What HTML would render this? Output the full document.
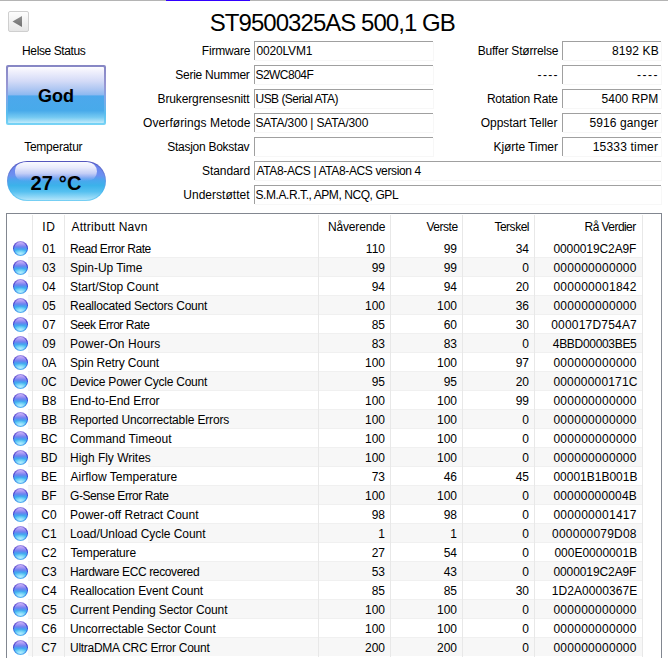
<!DOCTYPE html>
<html><head><meta charset="utf-8">
<style>
*{margin:0;padding:0;box-sizing:border-box}
html,body{width:668px;height:658px;overflow:hidden;background:#fff}
body{position:relative;font-family:"Liberation Sans",sans-serif;color:#000;font-size:12px}
.a{position:absolute;white-space:nowrap}
#topline{position:absolute;left:0;top:0;width:668px;height:1px;background:#b4b4b4}
#topblue{position:absolute;left:166px;top:0;width:84px;height:1px;background:#3200ff}
#back{position:absolute;left:8px;top:11px;width:21px;height:21px;border:1px solid #cfcfcf;border-radius:2px;background:linear-gradient(#fdfdfd,#e6e6e6)}
#title{left:-1px;top:8px;width:668px;text-align:center;font-size:24px;letter-spacing:-0.85px}
.lbl{position:absolute;text-align:right;white-space:nowrap;line-height:20px;height:20px;letter-spacing:-0.25px}
.box{position:absolute;height:20px}
.box::before{content:"";position:absolute;left:0;top:0;right:1px;bottom:1px;border-top:1px solid #a0a0a0;border-left:1px solid #a0a0a0}
.box::after{content:"";position:absolute;left:1px;top:1px;right:0;bottom:0;border-right:1px solid #f7f7f7;border-bottom:1px solid #f7f7f7}
.r{text-align:right}
.box:not(.r){letter-spacing:-0.25px}
#god{position:absolute;left:6px;top:65px;width:100px;height:60px;border-radius:2px;background:linear-gradient(#8686c4 0%,#9898d4 35%,#80a8e8 55%,#58bcee 80%,#78d4f6 100%);padding:2px}
#god .in{width:96px;height:56px;border-radius:1px;background:linear-gradient(#fdfdff 0%,#f0f0fc 8%,#d4dbf7 25%,#adc6f2 40%,#8cb8f0 50%,#4ca8ec 51.5%,#48aaea 78%,#76caf2 90%,#c0eafa 100%);font-weight:bold;font-size:18px;text-align:center;line-height:58px}
#temp{position:absolute;left:7px;top:161px;width:99px;height:40px;border-radius:20px;background:linear-gradient(#5454bc 0%,#6a8ae0 40%,#48b8f0 75%,#78d0f4 100%);padding:1px}
#temp .in{position:relative;width:97px;height:38px;border-radius:19px;background:linear-gradient(#6a7cec 0%,#6c90f0 35%,#4aa6ee 48%,#3cb2ea 62%,#56c0f0 78%,#b0e4fa 100%);overflow:hidden}
#temp .gl2{position:absolute;left:7px;top:0px;width:82px;height:19px;border-radius:9px 10px 10px 9px;background:linear-gradient(#fafaff 0%,#e8eafc 30%,#c4cef6 60%,rgba(150,180,244,.55) 85%,rgba(120,160,240,0) 100%)}
#temp span{position:absolute;left:0;top:0;width:97px;text-align:center;font-weight:bold;font-size:20px;line-height:42px;letter-spacing:0.2px;padding-right:1px}
#list{position:absolute;left:6px;top:213px;width:656px;height:450px;border:1px solid #828790;border-bottom:none;overflow:hidden;font-size:12px}
.rb{position:absolute;left:21px;width:614px;height:19px;background:#f7f7f7;border-top:1px solid #f0f0f0}
.gl{position:absolute;top:1px;width:1px;height:442px;background:#e8e8e8}
.t{position:absolute;white-space:nowrap;line-height:19px;height:19px}
.c{text-align:center}
.n{letter-spacing:-0.3px}
.ic{position:absolute;left:5.5px;width:15px;height:15px;margin-top:0.5px;border-radius:50%;background:linear-gradient(#a898ec 0%,#4a3ac8 25%,#3a4ed8 50%,#3a84e8 78%,#58b8f2 100%)}
.ic::after{content:"";position:absolute;left:1px;top:1px;width:13px;height:13px;border-radius:50%;background:radial-gradient(ellipse 55% 32% at 50% 88%,rgba(190,240,255,.85),rgba(190,240,255,0)),linear-gradient(#ccb6fa 0%,#a898f4 18%,#6e82f0 38%,#4a9cf0 52%,#3cb8f0 68%,#54c8f4 85%,#90e0fa 100%)}

.hl{position:absolute;left:21px;width:614px;height:1px;background:#f0f0f0}

.x{position:absolute;white-space:nowrap}
</style></head><body>
<div id="topline"></div><div id="topblue"></div>
<div id="back"><svg width="19" height="19" style="position:absolute;left:0;top:0"><defs><linearGradient id="tg" x1="0" y1="0" x2="0" y2="1"><stop offset="0" stop-color="#909090"/><stop offset="1" stop-color="#707070"/></linearGradient></defs><polygon points="3.5,9.5 13,4 13,15" fill="url(#tg)"/></svg></div>
<div id="god"><div class="in">God</div></div>
<div id="temp"><div class="in"><div class="gl2"></div><span>27 °C</span></div></div>
<div class="box" style="left:254px;top:41px;width:180px"></div>
<div class="box" style="left:254px;top:65px;width:180px"></div>
<div class="box" style="left:254px;top:89px;width:180px"></div>
<div class="box" style="left:254px;top:113px;width:180px"></div>
<div class="box" style="left:254px;top:137px;width:180px"></div>
<div class="box" style="left:254px;top:161px;width:408px"></div>
<div class="box" style="left:254px;top:185px;width:408px"></div>
<div class="box" style="left:562px;top:41px;width:100px"></div>
<div class="box" style="left:562px;top:65px;width:100px"></div>
<div class="box" style="left:562px;top:89px;width:100px"></div>
<div class="box" style="left:562px;top:113px;width:100px"></div>
<div class="box" style="left:562px;top:137px;width:100px"></div>
<div id="list">
<div class="rb" style="top:43px"></div>
<div class="hl" style="top:62px"></div>
<div class="rb" style="top:81px"></div>
<div class="hl" style="top:100px"></div>
<div class="rb" style="top:119px"></div>
<div class="hl" style="top:138px"></div>
<div class="rb" style="top:157px"></div>
<div class="hl" style="top:176px"></div>
<div class="rb" style="top:195px"></div>
<div class="hl" style="top:214px"></div>
<div class="rb" style="top:233px"></div>
<div class="hl" style="top:252px"></div>
<div class="rb" style="top:271px"></div>
<div class="hl" style="top:290px"></div>
<div class="rb" style="top:309px"></div>
<div class="hl" style="top:328px"></div>
<div class="rb" style="top:347px"></div>
<div class="hl" style="top:366px"></div>
<div class="rb" style="top:385px"></div>
<div class="hl" style="top:404px"></div>
<div class="rb" style="top:423px"></div>
<div class="gl" style="left:25px"></div>
<div class="gl" style="left:57px"></div>
<div class="gl" style="left:311px"></div>
<div class="gl" style="left:383px"></div>
<div class="gl" style="left:455px"></div>
<div class="gl" style="left:527px"></div>
<div class="gl" style="left:635px"></div>
<div class="ic" style="top:26px"></div>
<div class="ic" style="top:45px"></div>
<div class="ic" style="top:64px"></div>
<div class="ic" style="top:83px"></div>
<div class="ic" style="top:102px"></div>
<div class="ic" style="top:121px"></div>
<div class="ic" style="top:140px"></div>
<div class="ic" style="top:159px"></div>
<div class="ic" style="top:178px"></div>
<div class="ic" style="top:197px"></div>
<div class="ic" style="top:216px"></div>
<div class="ic" style="top:235px"></div>
<div class="ic" style="top:254px"></div>
<div class="ic" style="top:273px"></div>
<div class="ic" style="top:292px"></div>
<div class="ic" style="top:311px"></div>
<div class="ic" style="top:330px"></div>
<div class="ic" style="top:349px"></div>
<div class="ic" style="top:368px"></div>
<div class="ic" style="top:387px"></div>
<div class="ic" style="top:406px"></div>
<div class="ic" style="top:425px"></div>
</div>
<div class="x" style="left:209.8px;top:9px;line-height:28px;font-size:24px;letter-spacing:-0.958px">ST9500325AS 500,1 GB</div>
<div class="x" style="left:22.1px;top:41px;line-height:20px;letter-spacing:-0.4px">Helse Status</div>
<div class="x" style="left:24.2px;top:137px;line-height:20px;letter-spacing:-0.256px">Temperatur</div>
<div class="x" style="left:201.8px;top:41px;line-height:20px;letter-spacing:-0.186px">Firmware</div>
<div class="x" style="left:175.3px;top:65px;line-height:20px;letter-spacing:-0.255px">Serie Nummer</div>
<div class="x" style="left:157.5px;top:89px;line-height:20px;letter-spacing:-0.125px">Brukergrensesnitt</div>
<div class="x" style="left:143.1px;top:113px;line-height:20px;letter-spacing:0.082px">Overførings Metode</div>
<div class="x" style="left:167.3px;top:137px;line-height:20px;letter-spacing:-0.271px">Stasjon Bokstav</div>
<div class="x" style="left:202.0px;top:161px;line-height:20px;letter-spacing:-0.071px">Standard</div>
<div class="x" style="left:183.3px;top:185px;line-height:20px;letter-spacing:0.018px">Understøttet</div>
<div class="x" style="left:256.5px;top:42px;line-height:18px;letter-spacing:-0.171px">0020LVM1</div>
<div class="x" style="left:255.5px;top:66px;line-height:18px;letter-spacing:-0.543px">S2WC804F</div>
<div class="x" style="left:255.5px;top:90px;line-height:18px;letter-spacing:-0.527px">USB (Serial ATA)</div>
<div class="x" style="left:255.5px;top:114px;line-height:18px;letter-spacing:-0.156px">SATA/300 | SATA/300</div>
<div class="x" style="left:256.5px;top:162px;line-height:18px;letter-spacing:-0.364px">ATA8-ACS | ATA8-ACS version 4</div>
<div class="x" style="left:255.5px;top:186px;line-height:18px;letter-spacing:-0.429px">S.M.A.R.T., APM, NCQ, GPL</div>
<div class="x" style="left:477.7px;top:41px;line-height:20px;letter-spacing:-0.207px">Buffer Størrelse</div>
<div class="x" style="left:537.6px;top:65px;line-height:20px;letter-spacing:1.333px">----</div>
<div class="x" style="left:486.9px;top:89px;line-height:20px;letter-spacing:-0.192px">Rotation Rate</div>
<div class="x" style="left:480.8px;top:113px;line-height:20px;letter-spacing:-0.086px">Oppstart Teller</div>
<div class="x" style="left:493.5px;top:137px;line-height:20px;letter-spacing:-0.082px">Kjørte Timer</div>
<div class="x" style="left:611.9px;top:42px;line-height:18px;letter-spacing:0.117px">8192 KB</div>
<div class="x" style="left:637.0px;top:66px;line-height:18px;letter-spacing:1.533px">----</div>
<div class="x" style="left:601.5px;top:90px;line-height:18px;letter-spacing:0.014px">5400 RPM</div>
<div class="x" style="left:589.4px;top:114px;line-height:18px;letter-spacing:0.12px">5916 ganger</div>
<div class="x" style="left:592.7px;top:138px;line-height:18px;letter-spacing:0.19px">15333 timer</div>
<div class="x" style="left:42.3px;top:218px;line-height:19px;letter-spacing:0.5px">ID</div>
<div class="x" style="left:71.4px;top:218px;line-height:19px;letter-spacing:0.262px">Attributt Navn</div>
<div class="x" style="left:328.0px;top:218px;line-height:19px;letter-spacing:-0.163px">Nåverende</div>
<div class="x" style="left:426.4px;top:218px;line-height:19px;letter-spacing:-0.46px">Verste</div>
<div class="x" style="left:494.4px;top:218px;line-height:19px;letter-spacing:-0.483px">Terskel</div>
<div class="x" style="left:584.6px;top:218px;line-height:19px;letter-spacing:-0.567px">Rå Verdier</div>
<div class="x" style="left:70.0px;top:240px;line-height:19px;letter-spacing:-0.436px">Read Error Rate</div>
<div class="x" style="left:553.4px;top:240px;line-height:19px;letter-spacing:-0.091px">0000019C2A9F</div>
<div class="x" style="left:70.0px;top:259px;line-height:19px;letter-spacing:-0.027px">Spin-Up Time</div>
<div class="x" style="left:553.4px;top:259px;line-height:19px;letter-spacing:0.273px">000000000000</div>
<div class="x" style="left:70.0px;top:278px;line-height:19px;letter-spacing:-0.013px">Start/Stop Count</div>
<div class="x" style="left:553.4px;top:278px;line-height:19px;letter-spacing:0.273px">000000001842</div>
<div class="x" style="left:70.0px;top:297px;line-height:19px;letter-spacing:-0.225px">Reallocated Sectors Count</div>
<div class="x" style="left:553.4px;top:297px;line-height:19px;letter-spacing:0.273px">000000000000</div>
<div class="x" style="left:70.0px;top:316px;line-height:19px;letter-spacing:-0.443px">Seek Error Rate</div>
<div class="x" style="left:551.2px;top:316px;line-height:19px;letter-spacing:0.2px">000017D754A7</div>
<div class="x" style="left:70.0px;top:335px;line-height:19px;letter-spacing:0.069px">Power-On Hours</div>
<div class="x" style="left:552.8px;top:335px;line-height:19px;letter-spacing:-0.309px">4BBD00003BE5</div>
<div class="x" style="left:70.0px;top:354px;line-height:19px;letter-spacing:-0.153px">Spin Retry Count</div>
<div class="x" style="left:553.4px;top:354px;line-height:19px;letter-spacing:0.273px">000000000000</div>
<div class="x" style="left:70.0px;top:373px;line-height:19px;letter-spacing:-0.235px">Device Power Cycle Count</div>
<div class="x" style="left:553.4px;top:373px;line-height:19px;letter-spacing:0.182px">00000000171C</div>
<div class="x" style="left:70.0px;top:392px;line-height:19px;letter-spacing:-0.073px">End-to-End Error</div>
<div class="x" style="left:553.4px;top:392px;line-height:19px;letter-spacing:0.273px">000000000000</div>
<div class="x" style="left:70.0px;top:411px;line-height:19px;letter-spacing:-0.146px">Reported Uncorrectable Errors</div>
<div class="x" style="left:553.4px;top:411px;line-height:19px;letter-spacing:0.273px">000000000000</div>
<div class="x" style="left:70.0px;top:430px;line-height:19px;letter-spacing:0.014px">Command Timeout</div>
<div class="x" style="left:553.4px;top:430px;line-height:19px;letter-spacing:0.273px">000000000000</div>
<div class="x" style="left:70.0px;top:449px;line-height:19px;letter-spacing:-0.021px">High Fly Writes</div>
<div class="x" style="left:553.4px;top:449px;line-height:19px;letter-spacing:0.273px">000000000000</div>
<div class="x" style="left:70.5px;top:468px;line-height:19px;letter-spacing:0.017px">Airflow Temperature</div>
<div class="x" style="left:553.4px;top:468px;line-height:19px">00001B1B001B</div>
<div class="x" style="left:70.0px;top:487px;line-height:19px;letter-spacing:-0.424px">G-Sense Error Rate</div>
<div class="x" style="left:553.4px;top:487px;line-height:19px;letter-spacing:0.182px">00000000004B</div>
<div class="x" style="left:70.0px;top:506px;line-height:19px">Power-off Retract Count</div>
<div class="x" style="left:553.4px;top:506px;line-height:19px;letter-spacing:0.273px">000000001417</div>
<div class="x" style="left:70.0px;top:525px;line-height:19px;letter-spacing:-0.055px">Load/Unload Cycle Count</div>
<div class="x" style="left:552.1px;top:525px;line-height:19px;letter-spacing:0.209px">000000079D08</div>
<div class="x" style="left:70.5px;top:544px;line-height:19px;letter-spacing:-0.18px">Temperature</div>
<div class="x" style="left:554.4px;top:544px;line-height:19px">000E0000001B</div>
<div class="x" style="left:70.0px;top:563px;line-height:19px;letter-spacing:-0.371px">Hardware ECC recovered</div>
<div class="x" style="left:553.4px;top:563px;line-height:19px;letter-spacing:-0.091px">0000019C2A9F</div>
<div class="x" style="left:70.0px;top:582px;line-height:19px;letter-spacing:-0.096px">Reallocation Event Count</div>
<div class="x" style="left:551.8px;top:582px;line-height:19px;letter-spacing:0.055px">1D2A0000367E</div>
<div class="x" style="left:70.0px;top:601px;line-height:19px;letter-spacing:-0.122px">Current Pending Sector Count</div>
<div class="x" style="left:553.4px;top:601px;line-height:19px;letter-spacing:0.273px">000000000000</div>
<div class="x" style="left:70.0px;top:620px;line-height:19px;letter-spacing:-0.092px">Uncorrectable Sector Count</div>
<div class="x" style="left:553.4px;top:620px;line-height:19px;letter-spacing:0.273px">000000000000</div>
<div class="x" style="left:70.0px;top:639px;line-height:19px;letter-spacing:-0.274px">UltraDMA CRC Error Count</div>
<div class="x" style="left:553.4px;top:639px;line-height:19px;letter-spacing:0.273px">000000000000</div>
<div class="x c" style="left:33px;width:32px;top:240px;line-height:19px">01</div>
<div class="x r" style="left:318px;width:67px;top:240px;line-height:19px">110</div>
<div class="x r" style="left:390px;width:67px;top:240px;line-height:19px">99</div>
<div class="x r" style="left:462px;width:67px;top:240px;line-height:19px">34</div>
<div class="x c" style="left:33px;width:32px;top:259px;line-height:19px">03</div>
<div class="x r" style="left:318px;width:67px;top:259px;line-height:19px">99</div>
<div class="x r" style="left:390px;width:67px;top:259px;line-height:19px">99</div>
<div class="x r" style="left:462px;width:67px;top:259px;line-height:19px">0</div>
<div class="x c" style="left:33px;width:32px;top:278px;line-height:19px">04</div>
<div class="x r" style="left:318px;width:67px;top:278px;line-height:19px">94</div>
<div class="x r" style="left:390px;width:67px;top:278px;line-height:19px">94</div>
<div class="x r" style="left:462px;width:67px;top:278px;line-height:19px">20</div>
<div class="x c" style="left:33px;width:32px;top:297px;line-height:19px">05</div>
<div class="x r" style="left:318px;width:67px;top:297px;line-height:19px">100</div>
<div class="x r" style="left:390px;width:67px;top:297px;line-height:19px">100</div>
<div class="x r" style="left:462px;width:67px;top:297px;line-height:19px">36</div>
<div class="x c" style="left:33px;width:32px;top:316px;line-height:19px">07</div>
<div class="x r" style="left:318px;width:67px;top:316px;line-height:19px">85</div>
<div class="x r" style="left:390px;width:67px;top:316px;line-height:19px">60</div>
<div class="x r" style="left:462px;width:67px;top:316px;line-height:19px">30</div>
<div class="x c" style="left:33px;width:32px;top:335px;line-height:19px">09</div>
<div class="x r" style="left:318px;width:67px;top:335px;line-height:19px">83</div>
<div class="x r" style="left:390px;width:67px;top:335px;line-height:19px">83</div>
<div class="x r" style="left:462px;width:67px;top:335px;line-height:19px">0</div>
<div class="x c" style="left:33px;width:32px;top:354px;line-height:19px">0A</div>
<div class="x r" style="left:318px;width:67px;top:354px;line-height:19px">100</div>
<div class="x r" style="left:390px;width:67px;top:354px;line-height:19px">100</div>
<div class="x r" style="left:462px;width:67px;top:354px;line-height:19px">97</div>
<div class="x c" style="left:33px;width:32px;top:373px;line-height:19px">0C</div>
<div class="x r" style="left:318px;width:67px;top:373px;line-height:19px">95</div>
<div class="x r" style="left:390px;width:67px;top:373px;line-height:19px">95</div>
<div class="x r" style="left:462px;width:67px;top:373px;line-height:19px">20</div>
<div class="x c" style="left:33px;width:32px;top:392px;line-height:19px">B8</div>
<div class="x r" style="left:318px;width:67px;top:392px;line-height:19px">100</div>
<div class="x r" style="left:390px;width:67px;top:392px;line-height:19px">100</div>
<div class="x r" style="left:462px;width:67px;top:392px;line-height:19px">99</div>
<div class="x c" style="left:33px;width:32px;top:411px;line-height:19px">BB</div>
<div class="x r" style="left:318px;width:67px;top:411px;line-height:19px">100</div>
<div class="x r" style="left:390px;width:67px;top:411px;line-height:19px">100</div>
<div class="x r" style="left:462px;width:67px;top:411px;line-height:19px">0</div>
<div class="x c" style="left:33px;width:32px;top:430px;line-height:19px">BC</div>
<div class="x r" style="left:318px;width:67px;top:430px;line-height:19px">100</div>
<div class="x r" style="left:390px;width:67px;top:430px;line-height:19px">100</div>
<div class="x r" style="left:462px;width:67px;top:430px;line-height:19px">0</div>
<div class="x c" style="left:33px;width:32px;top:449px;line-height:19px">BD</div>
<div class="x r" style="left:318px;width:67px;top:449px;line-height:19px">100</div>
<div class="x r" style="left:390px;width:67px;top:449px;line-height:19px">100</div>
<div class="x r" style="left:462px;width:67px;top:449px;line-height:19px">0</div>
<div class="x c" style="left:33px;width:32px;top:468px;line-height:19px">BE</div>
<div class="x r" style="left:318px;width:67px;top:468px;line-height:19px">73</div>
<div class="x r" style="left:390px;width:67px;top:468px;line-height:19px">46</div>
<div class="x r" style="left:462px;width:67px;top:468px;line-height:19px">45</div>
<div class="x c" style="left:33px;width:32px;top:487px;line-height:19px">BF</div>
<div class="x r" style="left:318px;width:67px;top:487px;line-height:19px">100</div>
<div class="x r" style="left:390px;width:67px;top:487px;line-height:19px">100</div>
<div class="x r" style="left:462px;width:67px;top:487px;line-height:19px">0</div>
<div class="x c" style="left:33px;width:32px;top:506px;line-height:19px">C0</div>
<div class="x r" style="left:318px;width:67px;top:506px;line-height:19px">98</div>
<div class="x r" style="left:390px;width:67px;top:506px;line-height:19px">98</div>
<div class="x r" style="left:462px;width:67px;top:506px;line-height:19px">0</div>
<div class="x c" style="left:33px;width:32px;top:525px;line-height:19px">C1</div>
<div class="x r" style="left:318px;width:67px;top:525px;line-height:19px">1</div>
<div class="x r" style="left:390px;width:67px;top:525px;line-height:19px">1</div>
<div class="x r" style="left:462px;width:67px;top:525px;line-height:19px">0</div>
<div class="x c" style="left:33px;width:32px;top:544px;line-height:19px">C2</div>
<div class="x r" style="left:318px;width:67px;top:544px;line-height:19px">27</div>
<div class="x r" style="left:390px;width:67px;top:544px;line-height:19px">54</div>
<div class="x r" style="left:462px;width:67px;top:544px;line-height:19px">0</div>
<div class="x c" style="left:33px;width:32px;top:563px;line-height:19px">C3</div>
<div class="x r" style="left:318px;width:67px;top:563px;line-height:19px">53</div>
<div class="x r" style="left:390px;width:67px;top:563px;line-height:19px">43</div>
<div class="x r" style="left:462px;width:67px;top:563px;line-height:19px">0</div>
<div class="x c" style="left:33px;width:32px;top:582px;line-height:19px">C4</div>
<div class="x r" style="left:318px;width:67px;top:582px;line-height:19px">85</div>
<div class="x r" style="left:390px;width:67px;top:582px;line-height:19px">85</div>
<div class="x r" style="left:462px;width:67px;top:582px;line-height:19px">30</div>
<div class="x c" style="left:33px;width:32px;top:601px;line-height:19px">C5</div>
<div class="x r" style="left:318px;width:67px;top:601px;line-height:19px">100</div>
<div class="x r" style="left:390px;width:67px;top:601px;line-height:19px">100</div>
<div class="x r" style="left:462px;width:67px;top:601px;line-height:19px">0</div>
<div class="x c" style="left:33px;width:32px;top:620px;line-height:19px">C6</div>
<div class="x r" style="left:318px;width:67px;top:620px;line-height:19px">100</div>
<div class="x r" style="left:390px;width:67px;top:620px;line-height:19px">100</div>
<div class="x r" style="left:462px;width:67px;top:620px;line-height:19px">0</div>
<div class="x c" style="left:33px;width:32px;top:639px;line-height:19px">C7</div>
<div class="x r" style="left:318px;width:67px;top:639px;line-height:19px">200</div>
<div class="x r" style="left:390px;width:67px;top:639px;line-height:19px">200</div>
<div class="x r" style="left:462px;width:67px;top:639px;line-height:19px">0</div>
</body></html>
